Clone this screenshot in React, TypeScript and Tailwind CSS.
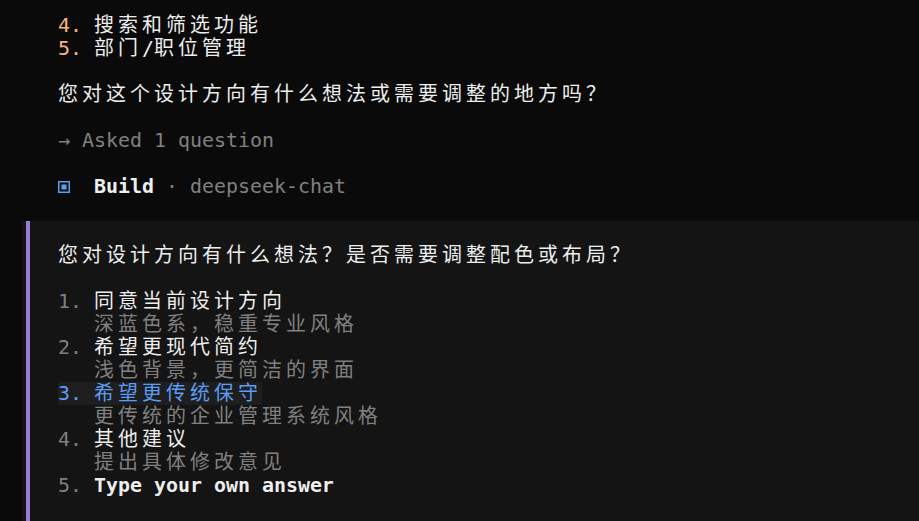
import React from 'react';

// terminal grid: 12px cells, 23px rows; wide (CJK / fullwidth) chars take two cells
const isWide = (c: string) => {
    const code = c.codePointAt(0) || 0;
    return code >= 0x2e80;
};

const T: React.FC<{ text: string }> = ({ text }) => (
    <>
        {Array.from(text).map((c, i) =>
            isWide(c) ? (
                <span key={i} className="inline-block w-[24px]">{c}</span>
            ) : (
                <span key={i}>{c}</span>
            )
        )}
    </>
);

const Row: React.FC<{ children?: React.ReactNode; className?: string }> = ({ children, className = '' }) => (
    <div className={`h-[23px] whitespace-pre ${className}`}>{children}</div>
);

const options = [
    { label: '同意当前设计方向', desc: '深蓝色系，稳重专业风格' },
    { label: '希望更现代简约', desc: '浅色背景，更简洁的界面' },
    { label: '希望更传统保守', desc: '更传统的企业管理系统风格' },
    { label: '其他建议', desc: '提出具体修改意见' },
];

const App: React.FC = () => {
    const active = 2;

    return (
        <div className="h-[521px] w-[919px] overflow-hidden bg-[#0a0a0a] pt-[14px] font-['DejaVu_Sans_Mono','Noto_Sans_CJK_SC',monospace] text-[19.93px] leading-[23px] text-[#eeeeee]">
            <div className="pl-[58px]">
                <Row>
                    <span className="text-[#fab283]">4. </span>
                    <T text="搜索和筛选功能" />
                </Row>
                <Row>
                    <span className="text-[#fab283]">5. </span>
                    <T text="部门/职位管理" />
                </Row>
                <Row />
                <Row>
                    <T text="您对这个设计方向有什么想法或需要调整的地方吗？" />
                </Row>
                <Row />
                <Row className="text-[#808080]">→ Asked 1 question</Row>
                <Row />
                <Row className="flex items-center">
                    <span className="inline-flex w-[36px] items-center">
                        <svg width="12" height="12" viewBox="0 0 12 12">
                            <rect x="0.75" y="0.75" width="10.5" height="10.5" fill="none" stroke="#5c9cf5" strokeWidth="1.5" />
                            <rect x="3.5" y="3.5" width="5" height="5" fill="#5c9cf5" />
                        </svg>
                    </span>
                    <span className="font-bold">Build</span>
                    <span className="text-[#808080]"> · deepseek-chat</span>
                </Row>
                <Row />
            </div>

            {/* question panel */}
            <div className="ml-[22px] h-[300px] bg-[#141414] pl-[4px]">
                <div className="h-full border-l-[4px] border-[#9d7cd8] pl-[28px]">
                    <Row />
                    <Row>
                        <T text="您对设计方向有什么想法？是否需要调整配色或布局？" />
                    </Row>
                    <Row />
                    {options.map((o, i) => (
                        <React.Fragment key={i}>
                            <Row>
                                <span className={i === active ? 'inline-block h-[23px] bg-[#1e1e1e] text-[#5c9cf5]' : ''}>
                                    <span className={i === active ? '' : 'text-[#808080]'}>{i + 1}. </span>
                                    <T text={o.label} />
                                </span>
                            </Row>
                            <Row className="text-[#808080]">
                                {'   '}
                                <T text={o.desc} />
                            </Row>
                        </React.Fragment>
                    ))}
                    <Row>
                        <span className="text-[#808080]">5. </span>
                        <span className="font-bold">Type your own answer</span>
                    </Row>
                </div>
            </div>
        </div>
    );
};

export default App;
